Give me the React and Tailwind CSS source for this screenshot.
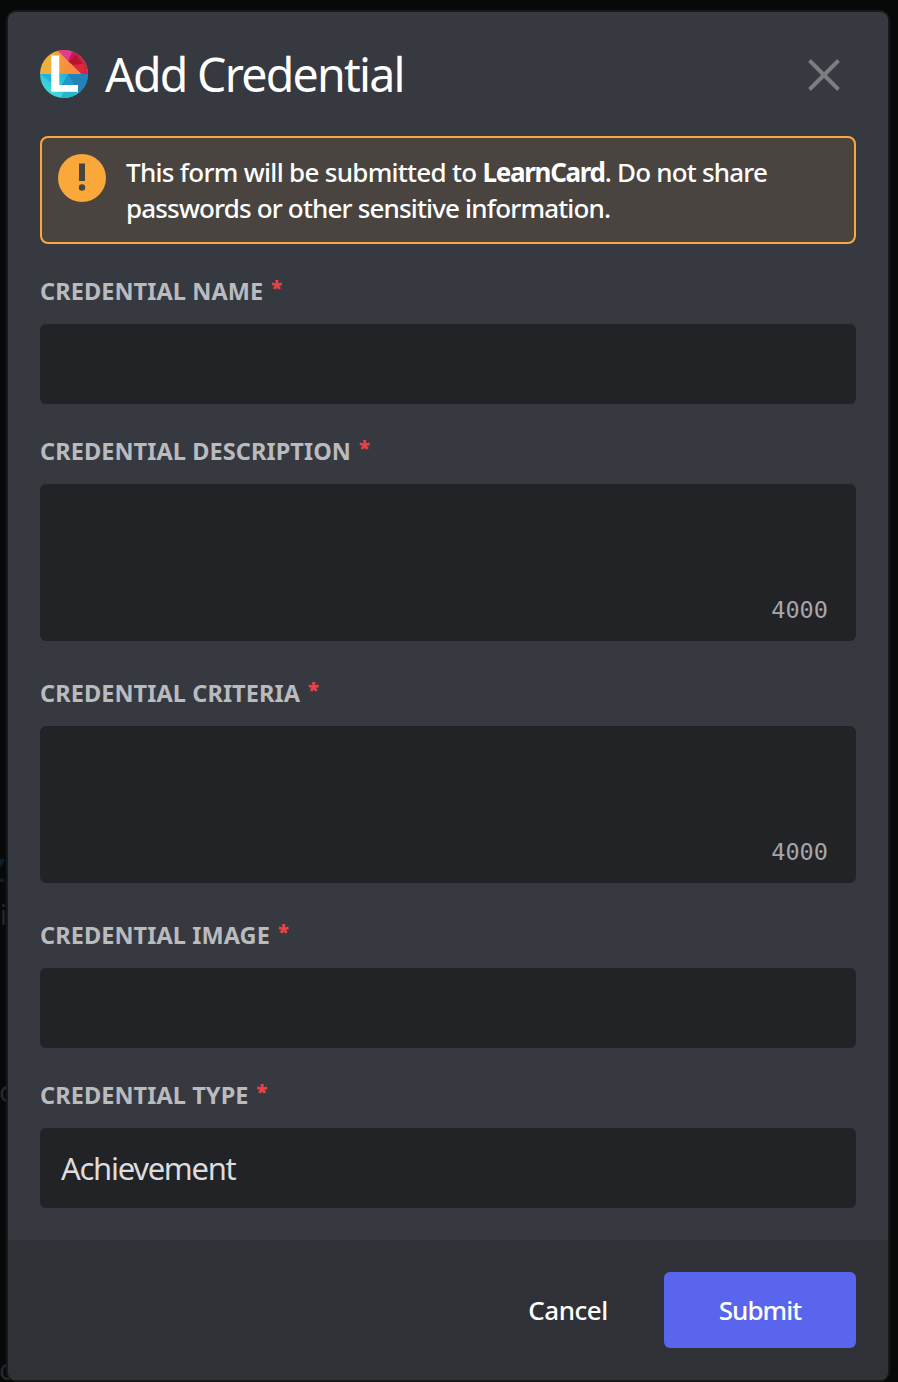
import React from "react";

function Logo() {
  return (
    <svg className="size-12 shrink-0" viewBox="0 0 48 48">
      <defs>
        <clipPath id="logo-disc">
          <circle cx="24" cy="24" r="24" />
        </clipPath>
        <linearGradient id="logo-orange" x1="0" y1="0" x2="1" y2="1">
          <stop offset="0" stopColor="#f0a03c" />
          <stop offset="1" stopColor="#fb8a3a" />
        </linearGradient>
        <linearGradient id="logo-cyan" x1="1" y1="0" x2="0" y2="1">
          <stop offset="0" stopColor="#1ba3d2" />
          <stop offset="1" stopColor="#4be8de" />
        </linearGradient>
      </defs>
      <g clipPath="url(#logo-disc)">
        <rect width="48" height="24" fill="#ecb03f" />
        <path d="M17 0H48V24H41Z" fill="#d81f4a" />
        <path d="M17 0H33L28 12Z" fill="#dd3f8a" />
        <path d="M33 0L39 6L28 12Z" fill="#c81763" />
        <path d="M28 12L36 5L43 14L33 15Z" fill="#b8152d" />
        <path d="M33 15L44 14V24H41Z" fill="#d92a3c" />
        <path d="M18 1L41 24H11V8Z" fill="url(#logo-orange)" />
        <path d="M28 12L41 24H23Z" fill="#fb8c3d" />
        <rect y="24" width="48" height="24" fill="url(#logo-cyan)" />
        <path d="M28 24H48V40L38 42Z" fill="#2382b8" />
        <path d="M28 24L38 41L20 38Z" fill="#1c98cb" />
        <path d="M0 24H12V33Z" fill="#22b3dc" />
        <path d="M24 42L38 41L32 48H20Z" fill="#25b6cc" />
      </g>
      <path d="M11.3 5.5H19.3V35H38V41.7H11.3Z" fill="#fff" />
    </svg>
  );
}

function Label({ children }) {
  return (
    <div className="flex h-8 items-center gap-2 whitespace-nowrap text-[23.5px] font-bold text-[#b9bbbe]">
      <span className="tracking-[0.08px]">{children}</span>
      <span className="-mt-2 text-[20px] font-black text-[#ed4245]">*</span>
    </div>
  );
}

function TextArea() {
  return (
    <div className="mt-4 flex h-[157px] items-end justify-end rounded-md bg-[#222327] pr-7 pb-[15px] font-['DejaVu_Sans_Mono',monospace] text-[23.6px] leading-8 text-[#a3a6aa]">
      4000
    </div>
  );
}

export default function App() {
  return (
    <div className="relative h-[1382px] w-[898px] overflow-hidden bg-[#070908] pt-3 pl-2 font-['Noto_Sans',sans-serif]">
      <span className="absolute top-[850px] -left-[13px] text-[32px] leading-10 font-semibold text-[#06202c]">Z</span>
      <span className="absolute top-[897px] left-0 text-[27px] leading-9 text-[#26272a]">i</span>
      <span className="absolute top-[1071px] -left-px text-[29px] leading-10 text-[#26272a]">c</span>
      <span className="absolute top-[1349px] -left-px text-[29px] leading-10 text-[#26272a]">c</span>

      <div className="relative flex h-[1368px] w-[880px] flex-col overflow-hidden rounded-lg bg-[#373940] ring-2 ring-[#17181a]">
        <div className="flex h-[1228px] flex-col px-8">
          <header className="flex h-[124px] items-center">
            <Logo />
            <h1 className="ml-[17px] flex-1 text-[46.5px] leading-none tracking-[-1.75px] whitespace-nowrap text-white">
              Add Credential
            </h1>
            <svg className="mt-0.5 mr-4 size-8" viewBox="0 0 32 32" fill="none" stroke="#7b7d82" strokeWidth="4">
              <path d="M1.5 1.5L30.5 30.5M30.5 1.5L1.5 30.5" />
            </svg>
          </header>

          <div className="flex h-[108px] rounded-lg border-2 border-[#faa83a] bg-[#49443f] pt-4 pl-4">
            <svg className="size-12 shrink-0" viewBox="0 0 48 48">
              <circle cx="24" cy="24" r="24" fill="#faa83a" />
              <path d="M21 9.5H27V27H21Z" fill="#49443f" />
              <circle cx="24" cy="33.5" r="3.2" fill="#49443f" />
            </svg>
            <p className="ml-5 text-[26px] leading-9 font-medium whitespace-nowrap text-white">
              <span className="tracking-[-0.71px]">This form will be submitted to </span>
              <b className="font-bold tracking-[-1.3px]">LearnCard</b>
              <span className="tracking-[-0.8px]">. Do not share</span>
              <br />
              <span className="tracking-[-0.84px]">passwords or other sensitive information.</span>
            </p>
          </div>

          <div className="mt-8">
            <Label>CREDENTIAL NAME</Label>
            <div className="mt-4 h-20 rounded-md bg-[#222327]" />
          </div>
          <div className="mt-8">
            <Label>CREDENTIAL DESCRIPTION</Label>
            <TextArea />
          </div>
          <div className="mt-[37px]">
            <Label>CREDENTIAL CRITERIA</Label>
            <TextArea />
          </div>
          <div className="mt-[37px]">
            <Label>CREDENTIAL IMAGE</Label>
            <div className="mt-4 h-20 rounded-md bg-[#222327]" />
          </div>
          <div className="mt-8">
            <Label>CREDENTIAL TYPE</Label>
            <div className="mt-4 flex h-20 items-center rounded-md bg-[#222327] pl-[21px] text-[31px] tracking-[-1.3px] text-[#dcddde]">
              Achievement
            </div>
          </div>
        </div>

        <footer className="flex h-[140px] items-start justify-end bg-[#303136] pt-8 pr-8">
          <button className="flex h-[76px] w-[192px] items-center justify-center text-[26px] font-medium tracking-[-0.5px] text-white">
            Cancel
          </button>
          <button className="flex h-[76px] w-[192px] items-center justify-center rounded-md bg-[#5965ed] text-[26px] font-medium tracking-[-0.95px] text-white">
            Submit
          </button>
        </footer>
      </div>
    </div>
  );
}
